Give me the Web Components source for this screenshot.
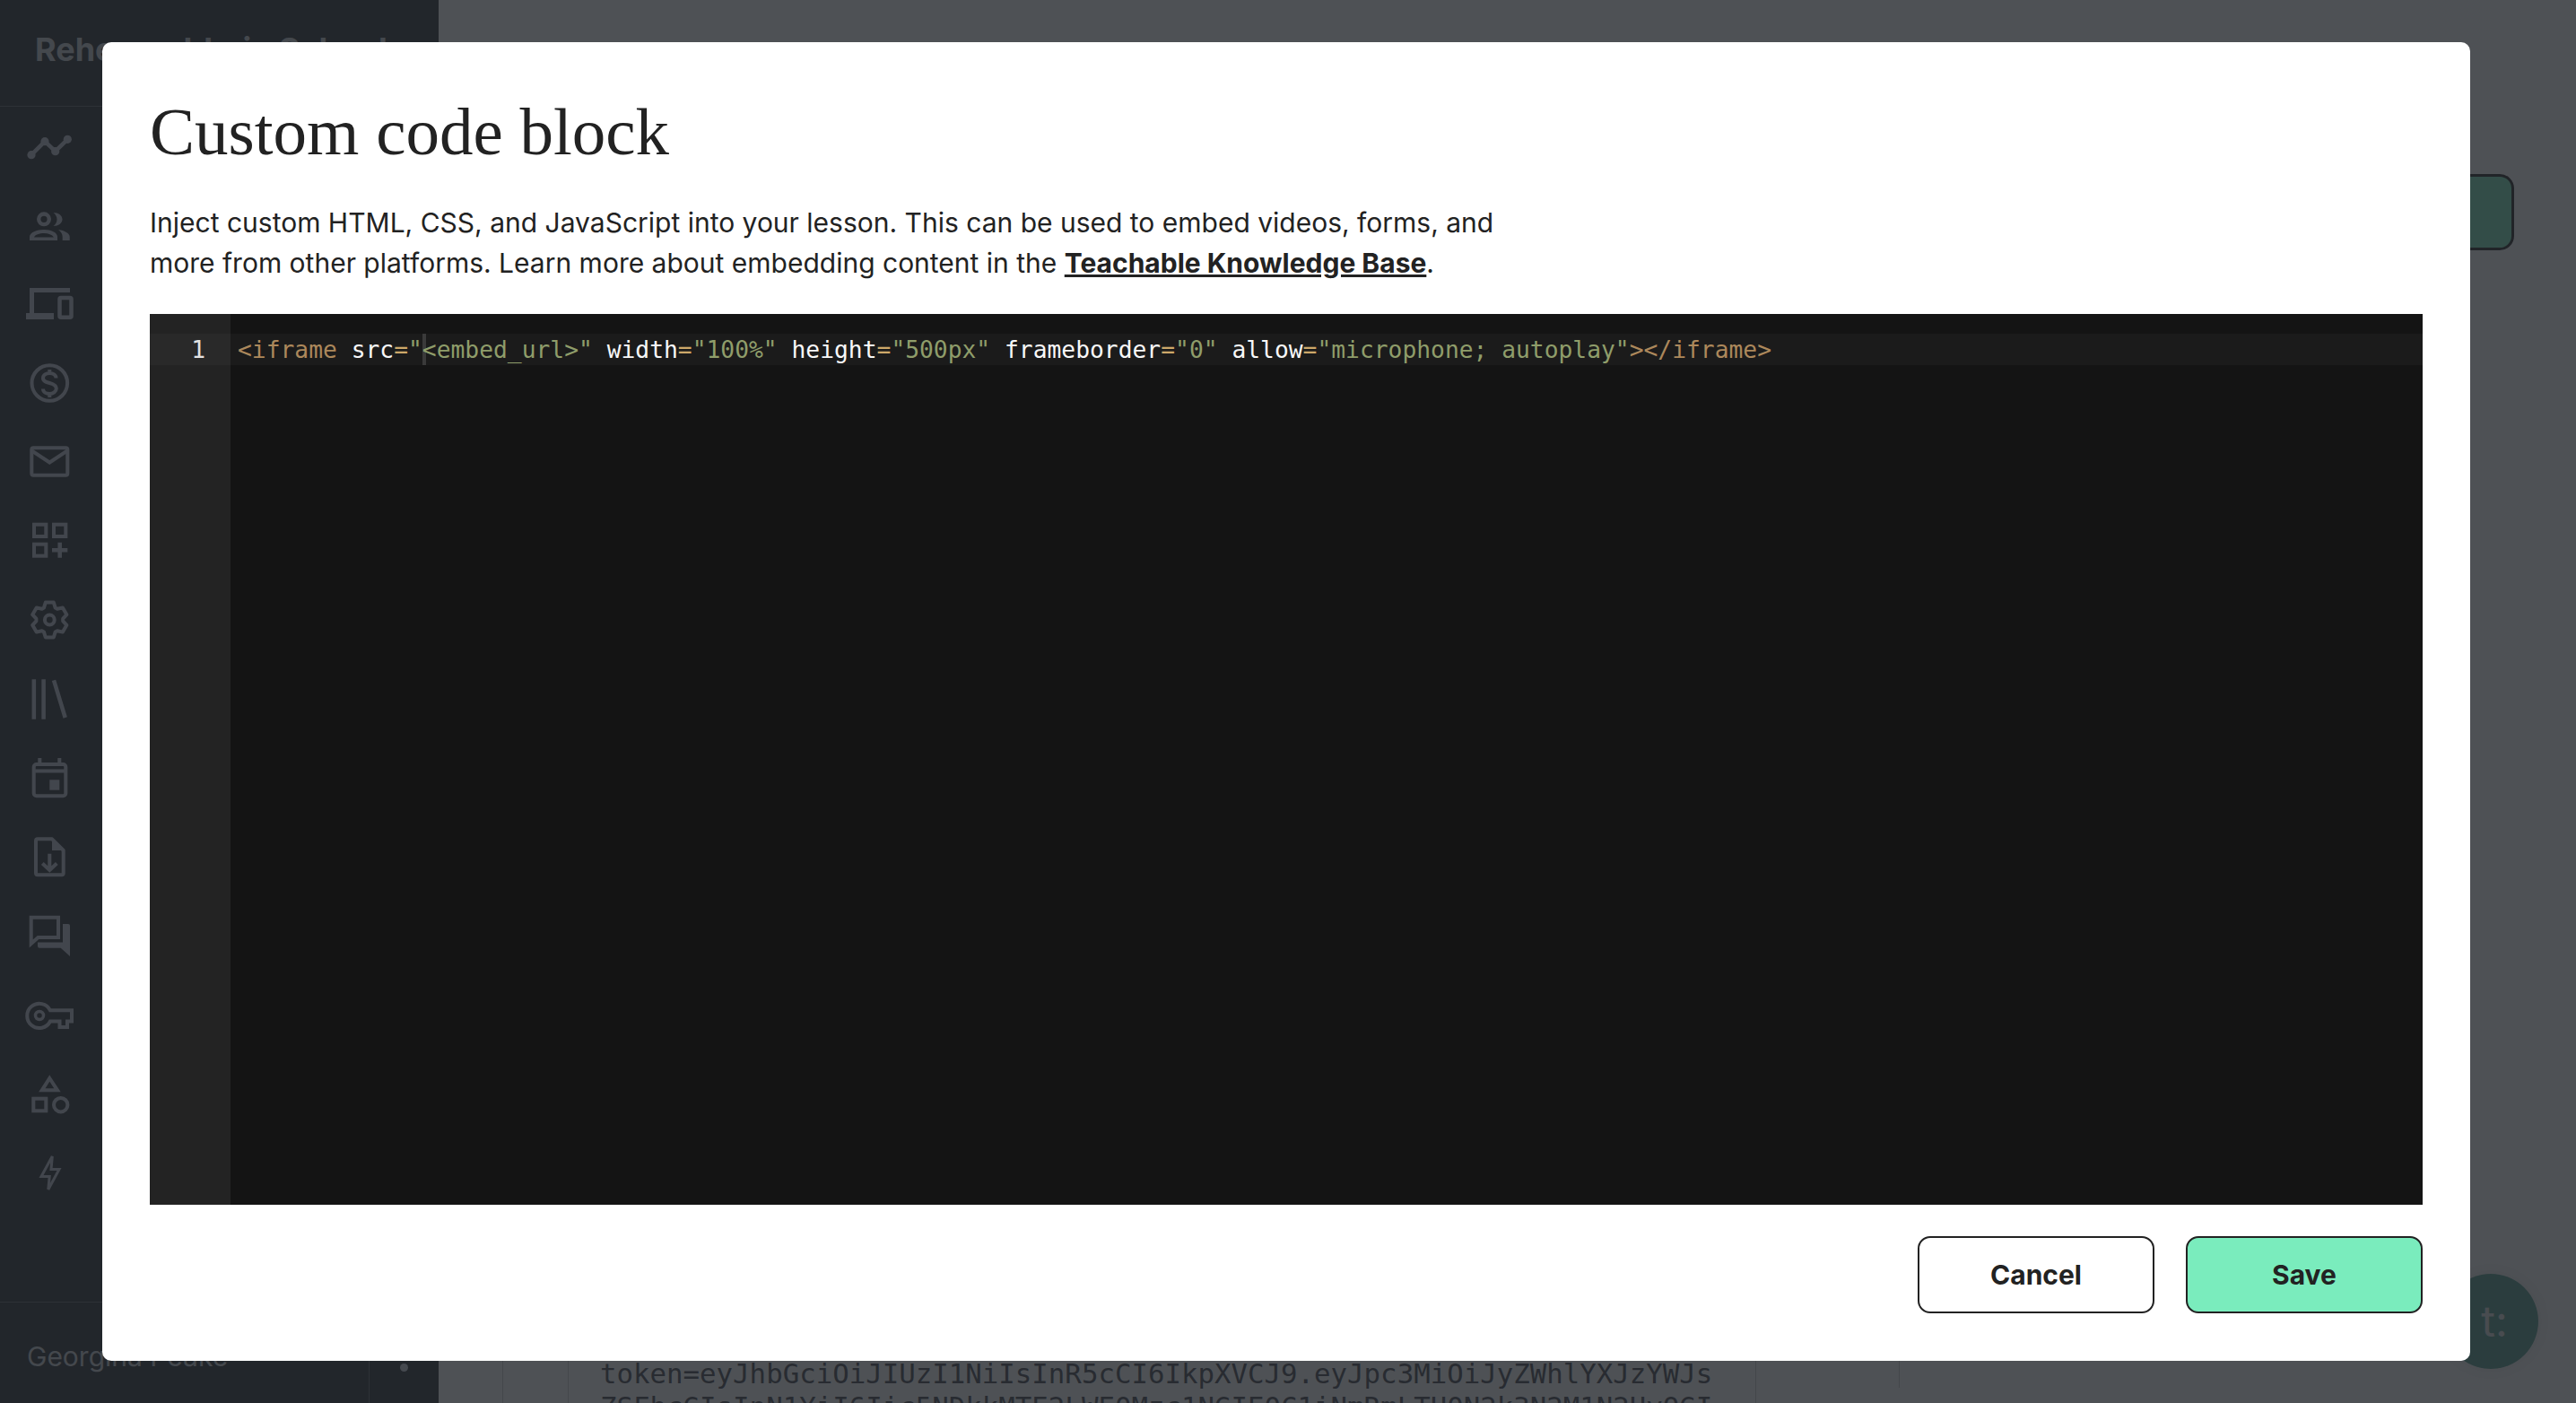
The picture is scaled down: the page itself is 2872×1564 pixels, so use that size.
<!DOCTYPE html>
<html lang="en">
<head>
<meta charset="utf-8">
<title>Custom code block</title>
<style>
  html, body { margin: 0; height: 100%; overflow: hidden; }
  body { font-family: Inter, "Noto Sans", sans-serif; }
</style>
</head>
<body>
<app-page>
  <side-nav slot="sidebar" school="Rehearsable.io School" user="Georgina Peake"></side-nav>
  <page-backdrop slot="main"></page-backdrop>
</app-page>
<modal-dialog>
  <span slot="title">Custom code block</span>
  Inject custom HTML, CSS, and JavaScript into your lesson. This can be used to embed videos, forms, and<br>
  more from other platforms. Learn more about embedding content in the <a href="#">Teachable Knowledge Base</a>.
  <code-editor slot="editor"></code-editor>
  <ui-button slot="actions">Cancel</ui-button>
  <ui-button slot="actions" primary>Save</ui-button>
</modal-dialog>

<script>
function gearPath() {
  const pts = [];
  const pt = (r, deg) => {
    const a = deg * Math.PI / 180;
    return (28.3 + r * Math.cos(a)).toFixed(1) + ' ' + (28 + r * Math.sin(a)).toFixed(1);
  };
  for (let i = 0; i < 6; i++) {
    const a = -90 + i * 60;
    pts.push(pt(15, a - 25), pt(20, a - 13), pt(20, a + 13), pt(15, a + 25));
  }
  return 'M' + pts.join('L') + 'z';
}

// all icons are drawn on a 56x56 box
const ICONS = {
  chart: `<path d="M8 37.7 23 22.7 34.7 33.7 48.3 20.3" class="s" stroke-width="4.5"/>
    <circle cx="8" cy="37.7" r="4.6" class="f"/><circle cx="23" cy="22.7" r="4.6" class="f"/>
    <circle cx="34.7" cy="33.7" r="4.6" class="f"/><circle cx="48.3" cy="20.3" r="4.6" class="f"/>`,
  people: `<circle cx="22" cy="21.3" r="5.8" class="s" stroke-width="4.4"/>
    <path class="f" d="M32.5 14C38 14 42.5 17 42.5 21.5S38 29 32.5 29C35 27 36.5 24.5 36.5 21.5S35 16 32.5 14z"/>
    <path class="f" fill-rule="evenodd" d="M6 45V41C6 36 14 33 22 33S37 36 37 41V45zM11 41.5H33C31 38.5 27 37 22 37S12 38.5 11 41.5z"/>
    <path class="f" d="M38 33C45 34 50.7 37 50.7 41V45H42.7V41C42.7 38 41 35 38 33z"/>`,
  devices: `<path class="f" d="M6 10H51V15H11V38H33V45H2V38H6z"/>
    <rect x="39.5" y="21" width="13" height="21.7" rx="1.5" class="s" stroke-width="4.5"/>`,
  dollar: `<circle cx="28.3" cy="28" r="19.8" class="s" stroke-width="4"/>
    <path class="s" stroke-width="4" d="M35.5 22.5C35.5 19 32 17 28.3 17S21 19 21 22.5 24.5 27 28.3 28 35.8 30.5 35.8 34 32 40 28.3 40 21 38 21 34.5M28.3 13V17M28.3 40V44"/>`,
  mail: `<rect x="8.3" y="12.3" width="40" height="30.4" rx="2" class="s" stroke-width="4"/>
    <path class="s" stroke-width="4" d="M8.5 15.5 28.3 28.5 48 15.5"/>`,
  apps: `<rect x="11" y="9.7" width="13.3" height="13.3" class="s" stroke-width="4"/>
    <rect x="33" y="9.7" width="13.3" height="13.3" class="s" stroke-width="4"/>
    <rect x="11" y="31.7" width="13.3" height="13" class="s" stroke-width="4"/>
    <path class="s" stroke-width="4.5" d="M31 38.2H48.3M39.7 29.7V46.7"/>`,
  gear: `<path class="s" stroke-width="4" stroke-linejoin="round" d="${gearPath()}"/>
    <circle cx="28.3" cy="28" r="5.4" class="s" stroke-width="4"/>`,
  library: `<path class="s" stroke-width="4.5" d="M10.8 6.3V50.7M21.6 6.3V50.7M33 7.3 45.7 49"/>`,
  calendar: `<rect x="10.7" y="13" width="35.6" height="35.3" rx="3" class="s" stroke-width="4"/>
    <path class="s" stroke-width="4" d="M17.3 6V12M39.3 6V12M10.7 20.5H46.3"/>
    <rect x="28.3" y="30.3" width="11" height="11.4" class="f"/>`,
  file: `<path class="s" stroke-width="4" stroke-linejoin="round" d="M15 8.3H31L43.7 21V46.3A2 2 0 0 1 41.7 48.3H15A2 2 0 0 1 13 46.3V10.3A2 2 0 0 1 15 8.3z"/>
    <path class="f" d="M31 7V21H45z"/>
    <path class="s" stroke-width="4" d="M28.3 24.7V42M20.3 35.5 28.3 43 36.3 35.5"/>`,
  forum: `<path class="s" stroke-width="4" d="M7.7 7.7H38V30H15.5L7.7 37z"/>
    <path class="f" d="M43 15H49A2 2 0 0 1 51 17V51L40.7 41.7H17A2 2 0 0 1 15 39.7V35.5H43z"/>`,
  key: `<path class="s" stroke-width="4" d="M29 23.3H53V35.5H48V42H39.5V35.5H29A13.6 13.6 0 1 1 29 23.3z"/>
    <circle cx="17" cy="29" r="4.5" class="s" stroke-width="3.5"/>`,
  shapes: `<path class="s" stroke-width="4" d="M28.3 11 37 24.3H19.8z"/>
    <rect x="10.3" y="33.7" width="14" height="13.6" class="s" stroke-width="4"/>
    <circle cx="40.7" cy="40.7" r="7.7" class="s" stroke-width="4"/>`,
  bolt: `<path class="s" stroke-width="3" d="M31.3 10 19 32.5H28.2L26.8 47 39 24.5H30z"/>`
};

class NavIcon extends HTMLElement {
  constructor() {
    super();
    const shadow = this.attachShadow({ mode: 'open' });
    shadow.innerHTML = `
      <style>
        :host { display: flex; height: 88px; align-items: center; padding-left: 27px; }
        svg { display: block; width: 56px; height: 56px; }
        .s { fill: none; stroke: #c4c8d4; }
        .f { fill: #c4c8d4; }
      </style>
      <svg viewBox="0 0 56 56">${ICONS[this.getAttribute('name')] || ''}</svg>
    `;
  }
}

class SideNav extends HTMLElement {
  constructor() {
    super();
    const shadow = this.attachShadow({ mode: 'open' });
    const names = ['chart', 'people', 'devices', 'dollar', 'mail', 'apps', 'gear',
      'library', 'calendar', 'file', 'forum', 'key', 'shapes', 'bolt'];
    shadow.innerHTML = `
      <style>
        :host {
          display: flex;
          flex-direction: column;
          width: 489px;
          height: 100%;
          background-color: #262a30;
          color: #c4c8d4;
        }
        .brand {
          height: 119px;
          box-sizing: border-box;
          padding: 33px 0 0 39px;
          font-size: 36px;
          font-weight: 700;
          line-height: 44px;
          color: #ccd0d6;
          border-bottom: 1px solid #5a5e66;
          white-space: nowrap;
        }
        nav { flex: 1; }
        .user {
          display: flex;
          height: 112px;
          border-top: 1px solid #5a5e66;
        }
        .name {
          flex: 1;
          padding-left: 30px;
          font-size: 30px;
          line-height: 120px;
          color: #ccd0d6;
        }
        .more {
          width: 77px;
          display: flex;
          flex-direction: column;
          align-items: center;
          justify-content: center;
          gap: 7px;
          border-left: 1px solid #5a5e66;
        }
        .more i { width: 9px; height: 9px; border-radius: 50%; background: #d0d4e2; }
      </style>
      <div class="brand">${this.getAttribute('school')}</div>
      <nav>${names.map(n => `<nav-icon name="${n}"></nav-icon>`).join('')}</nav>
      <div class="user">
        <div class="name">${this.getAttribute('user')}</div>
        <div class="more"><i></i><i></i><i></i></div>
      </div>
    `;
  }
}

class PageBackdrop extends HTMLElement {
  constructor() {
    super();
    const shadow = this.attachShadow({ mode: 'open' });
    shadow.innerHTML = `
      <style>
        :host {
          position: relative;
          display: flex;
          flex-direction: column;
          flex: 1;
          height: 100%;
          background-color: #fff;
          overflow: hidden;
        }
        .top {
          display: flex;
          justify-content: flex-end;
          padding: 194px 69px 0 0;
        }
        .publish {
          width: 300px;
          height: 85px;
          box-sizing: border-box;
          background: #7aecbd;
          border: 3px solid #222;
          border-radius: 16px;
        }
        .card {
          margin: auto 754px 0 71px;
          height: 51px;
          display: flex;
          padding: 0 160px 0 72px;
          border-left: 1px solid #ccc;
          background: linear-gradient(#ccc, #ccc) right top / 1px 34px no-repeat;
        }
        .card-inner {
          flex: 1;
          box-sizing: border-box;
          padding: 0 0 0 35px;
          border-left: 1px solid #ccc;
          border-right: 1px solid #ccc;
          font: 30.75px/37px "DejaVu Sans Mono", monospace;
          color: #40444b;
          white-space: pre;
          overflow: hidden;
        }
        .chat {
          position: absolute;
          left: 2235px;
          top: 1420px;
          width: 106px;
          height: 106px;
          display: flex;
          align-items: center;
          justify-content: center;
          border-radius: 50%;
          background: #539d8d;
          box-shadow: 0 0 24px rgba(0, 0, 0, .1);
          color: #e2e4e4;
          font: 48px/1 Inter, sans-serif;
          padding-left: 8px;
          box-sizing: border-box;
        }
      </style>
      <div class="top"><div class="publish"></div></div>
      <div class="card">
        <div class="card-inner">token=eyJhbGciOiJIUzI1NiIsInR5cCI6IkpXVCJ9.eyJpc3MiOiJyZWhlYXJzYWJs
ZSFhcGIsInN1YiI6Iic5NDkkMTE2LWE0Mzc1NGIE0C1iNmRmLTU0N2k3N2M1N2UyOGI</div>
      </div>
      <div class="chat">t:</div>
    `;
  }
}

class AppPage extends HTMLElement {
  constructor() {
    super();
    const shadow = this.attachShadow({ mode: 'open' });
    shadow.innerHTML = `
      <style>
        :host { display: flex; height: 100vh; overflow: hidden; }
      </style>
      <slot name="sidebar"></slot>
      <slot name="main"></slot>
    `;
  }
}

class CodeEditor extends HTMLElement {
  constructor() {
    super();
    const shadow = this.attachShadow({ mode: 'open' });
    shadow.innerHTML = `
      <style>
        :host {
          display: flex;
          flex: 1;
          min-height: 0;
          background-color: #141414;
          font: 26.3px/37px "DejaVu Sans Mono", monospace;
          color: #f8f8f8;
        }
        .gutter {
          width: 90px;
          box-sizing: border-box;
          padding-top: 22px;
          background-color: #232323;
          color: #e2e2e2;
          text-align: right;
        }
        .gutter div { height: 35px; padding-right: 28px; background: rgba(255, 255, 255, .031); }
        .lines { flex: 1; padding-top: 22px; }
        .line {
          height: 35px;
          padding-left: 8px;
          background: rgba(255, 255, 255, .031);
          white-space: pre;
        }
        .tag { color: #ac885b; }
        .eq { color: #cda869; }
        .str { color: #8f9d6a; }
        .cursor {
          display: inline-block;
          width: 4px;
          height: 35px;
          margin-right: -4px;
          vertical-align: top;
          background: #3a3a3a;
        }
      </style>
      <div class="gutter"><div>1</div></div>
      <div class="lines"><div class="line"><span class="tag">&lt;iframe</span> src<span class="eq">=</span><span class="str">"<span class="cursor"></span>&lt;embed_url&gt;"</span> width<span class="eq">=</span><span class="str">"100%"</span> height<span class="eq">=</span><span class="str">"500px"</span> frameborder<span class="eq">=</span><span class="str">"0"</span> allow<span class="eq">=</span><span class="str">"microphone; autoplay"</span><span class="tag">&gt;&lt;/iframe&gt;</span></div></div>
    `;
  }
}

class UiButton extends HTMLElement {
  constructor() {
    super();
    const shadow = this.attachShadow({ mode: 'open' });
    shadow.innerHTML = `
      <style>
        :host {
          display: flex;
          width: 264px;
          height: 86px;
          box-sizing: border-box;
          align-items: center;
          justify-content: center;
          background-color: #fff;
          border: 2px solid #222;
          border-radius: 14px;
          color: #222;
          font: 700 30px Inter, sans-serif;
          cursor: pointer;
        }
        :host([primary]) { background-color: #7aecbd; }
      </style>
      <slot></slot>
    `;
  }
}

class ModalDialog extends HTMLElement {
  constructor() {
    super();
    const shadow = this.attachShadow({ mode: 'open' });
    shadow.innerHTML = `
      <style>
        :host {
          position: fixed;
          inset: 0;
          display: flex;
          box-sizing: border-box;
          padding: 47px 118px 47px 114px;
          background-color: rgba(34, 37, 43, .8);
        }
        .modal {
          flex: 1;
          display: flex;
          flex-direction: column;
          min-width: 0;
          box-sizing: border-box;
          padding: 53px;
          background-color: #fff;
          border-radius: 10px;
          color: #222;
        }
        h1 {
          margin: 0;
          padding-top: 5px;
          height: 84px;
          font: 400 75px/84px "Liberation Serif", serif;
        }
        .body {
          margin: 37px 0 34px;
          font: 400 30px/45px Inter, sans-serif;
          color: #222;
        }
        .actions {
          display: flex;
          justify-content: flex-end;
          gap: 35px;
          margin-top: 35px;
        }
        ::slotted(a) { color: #222; font-weight: 700; }
      </style>
      <div class="modal">
        <h1><slot name="title"></slot></h1>
        <div class="body"><slot></slot></div>
        <slot name="editor"></slot>
        <div class="actions"><slot name="actions"></slot></div>
      </div>
    `;
  }
}

customElements.define('nav-icon', NavIcon);
customElements.define('side-nav', SideNav);
customElements.define('page-backdrop', PageBackdrop);
customElements.define('app-page', AppPage);
customElements.define('code-editor', CodeEditor);
customElements.define('ui-button', UiButton);
customElements.define('modal-dialog', ModalDialog);
</script>
</body>
</html>
